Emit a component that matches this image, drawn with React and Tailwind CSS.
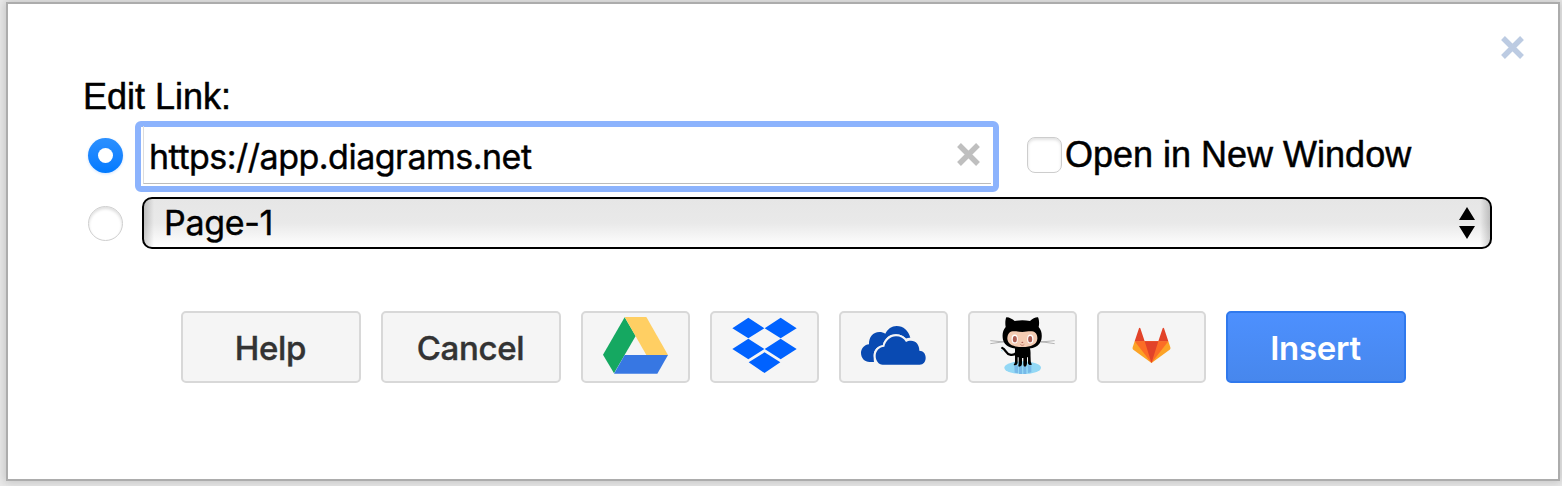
const buttonBase =
  "flex h-[72px] shrink-0 items-center justify-center rounded-[5px] border-2 font-['Inter',sans-serif] text-[33px] leading-none tracking-[-0.3px]";
const plain = "border-[#d8d8d8] bg-[#f5f5f5] font-medium text-[#333333] [-webkit-text-stroke:0.4px_#333333]";

function Cross({ className }) {
  return (
    <svg className={className} viewBox="0 0 23 23" fill="none" stroke="currentColor" strokeWidth="5.4">
      <path d="M2 2 21 21M21 2 2 21" />
    </svg>
  );
}

function IconButton({ label, viewBox, children }) {
  return (
    <button aria-label={label} className={`${buttonBase} ${plain} w-[109px]`}>
      <svg className="h-[68px] w-[105px]" viewBox={viewBox}>
        {children}
      </svg>
    </button>
  );
}

function Drive() {
  return (
    <IconButton label="Google Drive" viewBox="39 39 315 204">
      <path fill="#15a861" d="M164 52 197 108 132 220 99 164Z" />
      <path fill="#ffcf63" d="M164 51H229L294 165H229Z" />
      <path fill="#3777e3" d="M164 165H294L262 221H132Z" />
    </IconButton>
  );
}

function Dropbox() {
  return (
    <IconButton label="Dropbox" viewBox="426 39 315 204">
      <path
        fill="#0062ff"
        d="M535 53 583 85 535 115 487 85ZM632 53 680 85 632 115 584 85ZM535 116 583 147 535 178 487 147ZM632 116 680 147 632 178 584 147ZM583.5 157 631 187 583.5 219 536 187Z"
      />
    </IconButton>
  );
}

function OneDrive() {
  return (
    <IconButton label="OneDrive" viewBox="33 39 315 204">
      <path
        fill="#094ab2"
        d="M132 186H119C104 186 93 174 93 159C93 145 104 134 117 133C116 112 129 96 148 96C155 96 161 98 166 101C173 87 185 78 200 78C220 78 236 92 241 113C237 113 231 114 227 116C220 108 211 103 198 103C180 103 166 113 160 130V136C142 138 131 150 131 166C131 174 131 181 132 186Z"
      />
      <path
        fill="#094ab2"
        stroke="#f5f5f5"
        strokeWidth="12"
        paintOrder="stroke"
        d="M158 194C146 194 137 182 137 168C137 152 148 141 163 140C167 122 181 109 198 109C211 109 222 115 228 126C232 123 237 122 243 122C258 122 268 134 268 152C280 152 287 161 287 173C287 185 280 194 269 194Z"
      />
    </IconButton>
  );
}

function GitHub() {
  return (
    <IconButton label="GitHub" viewBox="30 39 315 204">
      <ellipse cx="188" cy="203" rx="55" ry="19" fill="#93d8f5" />
      <path fill="#77b9e8" d="M163 196H174V220L164 218ZM177 198H186V222H177ZM190 198H199V222H190ZM203 196H214V217L204 219Z" />
      <path d="M91 122 132 126M91 131 133 125M284 122 243 126M284 131 242 125" stroke="#929292" strokeWidth="2" fill="none" />
      <path d="M127 144C137 148 139 163 150 164C158 166 165 163 170 158" stroke="#000" strokeWidth="7" fill="none" strokeLinecap="round" />
      <path d="M124 150 127 154" stroke="#9bdcf2" strokeWidth="3" />
      <path
        d="M165 143H209C213 151 211 163 212 178C212 186 213 190 216 193C214 197 204 196 204 189V172H201V189C201 195 199 199 195 200C190 199 190 195 190 190V174H186V190C186 196 184 200 177 200C173 198 176 195 176 190V172H173V187C173 194 168 197 161 195C161 192 165 190 165 185Z"
        fill="#000"
      />
      <path
        d="M137 81C135 70 136 58 139 52C146 51 157 57 164 63C179 60 195 60 210 63C217 56 228 51 234 52C238 60 238 72 236 81C245 91 247 105 244 119C239 139 220 147 187 147C155 147 134 139 129 119C126 105 128 91 137 81Z"
        fill="#000"
      />
      <path
        d="M158 94C169 93 178 96 187 96C197 96 206 93 216 94C228 95 233 106 232 117C230 134 214 141 187 141C159 141 144 133 142 117C142 105 147 95 158 94Z"
        fill="#f4cbb2"
      />
      <ellipse cx="164" cy="117" rx="9.5" ry="13.5" fill="#fff" />
      <ellipse cx="211" cy="117" rx="9.5" ry="13.5" fill="#fff" />
      <ellipse cx="164.500" cy="117.500" rx="6" ry="9.500" fill="#ad5c51" />
      <ellipse cx="210.500" cy="117.500" rx="6" ry="9.500" fill="#ad5c51" />
      <ellipse cx="187" cy="127" rx="3" ry="2" fill="#ad5c51" />
      <path d="M181 133C184 137 190 137 193 133" stroke="#ad5c51" strokeWidth="2" fill="none" />
    </IconButton>
  );
}

function GitLab() {
  return (
    <IconButton label="GitLab" viewBox="27 39 315 204">
      <path fill="#fca326" d="M134 124 128 142C127 146 128 148 131 150L184.500 189 238 150C241 148 242 146 241 142L235 124Z" />
      <path fill="#fc6d26" d="M134 124H235L184.500 189Z" />
      <path fill="#e24329" d="M164 124H205L184.500 189ZM134 124 147 85C148 83 150 83 151 85L164 124ZM235 124 222 85C221 83 219 83 218 85L205 124Z" />
    </IconButton>
  );
}

export default function App() {
  return (
    <div className="h-[486px] w-[1562px] overflow-hidden bg-[#ebebeb] pl-[6px] pt-[2px] text-black">
      <div className="flex h-[479px] w-[1554px] flex-col border-2 border-[#acacac] bg-white shadow-[0_0_10px_2px_#c4c4c4]">
        <div className="flex h-[55px] shrink-0 justify-end pr-[34px] pt-[32px]">
          <Cross className="h-[23px] w-[23px] text-[#bccbe2]" />
        </div>
        <div className="flex h-[57px] shrink-0 items-end pl-[75px] font-['Liberation_Sans',sans-serif] text-[36px] leading-[39px] [-webkit-text-stroke:0.5px_#000]">
          <span className="whitespace-nowrap">Edit Link:</span>
        </div>
        <div className="flex h-[76px] shrink-0 items-center pl-[80px]">
          <span className="mt-[2px] flex h-[35px] w-[35px] items-center justify-center rounded-full bg-linear-to-b from-[#2b90ff] to-[#007aff] shadow-[0_1px_3px_#cfe2ff]">
            <span className="h-[15px] w-[15px] rounded-full bg-white" />
          </span>
          <div className="ml-[12px] mt-[4px] flex h-[71px] w-[864px] items-center rounded-[6px] border-6 border-[#8cb3fd] bg-white p-[2px] pt-0">
            <div className="flex h-[58px] w-full items-center border-b border-l border-b-[#bcbcbc] border-l-[#dddddd] pl-[5px] pr-[11px]">
              <span className="mt-[5px] grow whitespace-nowrap font-['Inter',sans-serif] text-[34px] leading-none tracking-[-0.5px] [-webkit-text-stroke:0.4px_#000]">https://app.diagrams.net</span>
              <Cross className="h-[23px] w-[23px] text-[#bfbfbf]" />
            </div>
          </div>
          <span className="ml-[28px] mt-[2px] h-[36px] w-[35px] rounded-[8px] border border-[#cdcdcd] bg-white shadow-[inset_0_2px_3px_#e2e2e2]" />
          <span className="ml-[3px] whitespace-nowrap font-['Liberation_Sans',sans-serif] text-[36px] leading-[41px] [-webkit-text-stroke:0.5px_#000]">Open in New Window</span>
        </div>
        <div className="flex h-[61px] shrink-0 items-center pl-[80px] pt-px">
          <span className="mt-[1px] h-[35px] w-[35px] rounded-full border border-[#cfcfcf] bg-white shadow-[inset_0_2px_3px_#dedede]" />
          <div className="ml-[19px] flex h-[52px] w-[1350px] items-center justify-between rounded-[10px] border-2 border-black bg-[linear-gradient(to_right,#0000002e,#00000000_10px,#00000000_1336px,#0000002e),linear-gradient(#e6e6e6,#e9e9e9_50%,#ffffff)] pl-[20px] pr-[15px]">
            <span className="whitespace-nowrap font-['Inter',sans-serif] text-[34px] leading-none tracking-[-0.3px] [-webkit-text-stroke:0.4px_#000]">Page-1</span>
            <svg className="h-[32px] w-[16px]" viewBox="0 0 16 32">
              <path d="M8 0 16 13H0ZM0 19H16L8 32Z" />
            </svg>
          </div>
        </div>
        <div className="flex gap-[20px] pl-[173px] pt-[58px]">
          <button className={`${buttonBase} ${plain} w-[180px] pr-px pt-[2px]`}>Help</button>
          <button className={`${buttonBase} ${plain} w-[180px] pr-px pt-[2px]`}>Cancel</button>
          <Drive />
          <Dropbox />
          <OneDrive />
          <GitHub />
          <GitLab />
          <button className={`${buttonBase} w-[180px] border-[#3079ed] bg-linear-to-b from-[#4d90fe] to-[#4787ed] pr-px pt-[2px] font-semibold text-white`}>
            Insert
          </button>
        </div>
      </div>
    </div>
  );
}
